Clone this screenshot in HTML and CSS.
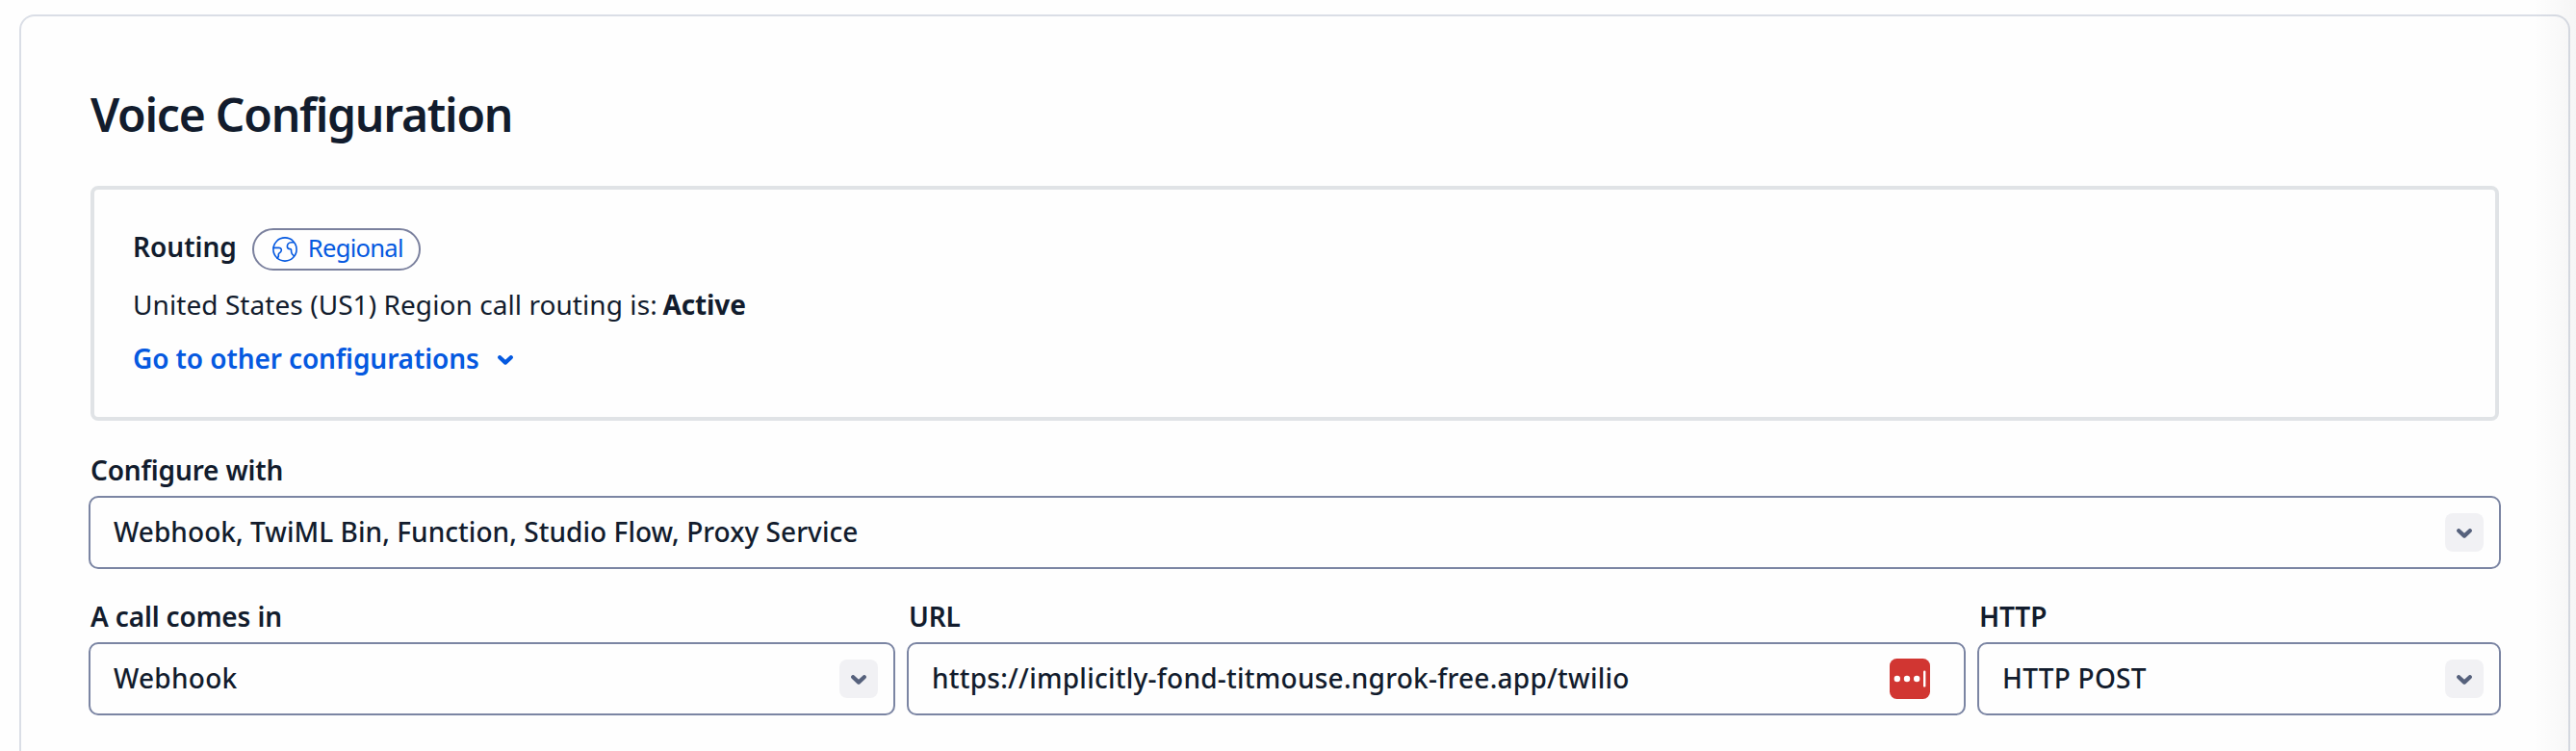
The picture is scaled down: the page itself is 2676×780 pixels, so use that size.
FILE: index.html
```
<!DOCTYPE html>
<html lang="en">
<head>
<meta charset="utf-8">
<title>Voice Configuration</title>
<link rel="stylesheet" href="styles.css">
</head>
<body>
<main class="card">
  <h1 class="title">Voice Configuration</h1>
  <section class="routing">
    <div class="routing-head">
      <h2 class="routing-label">Routing</h2>
      <span class="pill">
        <svg class="globe" viewBox="0 0 26 26" fill="none" stroke="currentColor" stroke-width="1.6" stroke-linejoin="round" stroke-linecap="round">
          <circle cx="13" cy="13" r="12.1"/>
          <path d="M1 11.4H6.8C9.6 11.4 9.8 13.8 8.8 15.4C8 16.8 6.3 16.6 6.3 18.2C6.6 20 5.6 21.8 4.9 22.2"/>
          <path d="M22.4 5.7H19.6C16.9 5.7 15.4 7.8 15.4 10C15.4 12.2 16.8 12.6 18.2 12.6C19.8 12.6 19.6 14 19.6 15.6C19.6 17.4 20.6 18.4 22.2 19.6"/>
        </svg>
        <span class="pill-text">Regional</span>
      </span>
    </div>
    <p class="status">United States (US1) Region call routing is: <strong class="active">Active</strong></p>
    <a class="link" href="#"><span>Go to other configurations</span>
      <svg class="chevron" viewBox="0 0 16 10"><path d="M2.2 2.2L8 7.6L13.8 2.2"/></svg>
    </a>
  </section>
  <form class="form">
    <div class="field">
      <label class="label">Configure with</label>
      <div class="control"><span class="value">Webhook, TwiML Bin, Function, Studio Flow, Proxy Service</span><span class="toggle"><svg class="chevron" viewBox="0 0 16 10"><path d="M2.2 2.2L8 7.6L13.8 2.2"/></svg></span></div>
    </div>
    <div class="row">
      <div class="field">
        <label class="label">A call comes in</label>
        <div class="control"><span class="value value-short">Webhook</span><span class="toggle"><svg class="chevron" viewBox="0 0 16 10"><path d="M2.2 2.2L8 7.6L13.8 2.2"/></svg></span></div>
      </div>
      <div class="field">
        <label class="label">URL</label>
        <div class="control control-url"><span class="value value-url">https://implicitly-fond-titmouse.ngrok-free.app/twilio</span>
          <svg class="vault" viewBox="0 0 42 42"><rect width="42" height="42" rx="7.5" fill="#d13632"/><g fill="#fff"><circle cx="7.8" cy="21" r="3.2"/><circle cx="18" cy="21" r="3.2"/><circle cx="28.2" cy="21" r="3.2"/><rect x="35" y="12.6" width="2.4" height="17" rx="1.2"/></g></svg>
        </div>
      </div>
      <div class="field">
        <label class="label">HTTP</label>
        <div class="control"><span class="value value-short">HTTP POST</span><span class="toggle"><svg class="chevron" viewBox="0 0 16 10"><path d="M2.2 2.2L8 7.6L13.8 2.2"/></svg></span></div>
      </div>
    </div>
  </form>
</main>
<div class="edge-shade"></div>
</body>
</html>
```
FILE: styles.css
```
* { box-sizing: border-box; }

body {
  margin: 0;
  height: 780px;
  overflow: hidden;
  padding: 15px 6px 0 20px;
  background: #fefefe;
  color: #121c2d;
  font-family: "Noto Sans", "Open Sans", sans-serif;
  font-size: 28px;
}

.card {
  height: 765px;
  padding: 72px 72px 0;
  border: 2px solid #dadee6;
  border-bottom: 0;
  border-radius: 16px 16px 0 0;
}

.title {
  margin: 0 0 44px;
  font-size: 48px;
  line-height: 60px;
  font-weight: 600;
  letter-spacing: -1.22px;
}

.routing {
  height: 244px;
  padding: 40px 38px 0 40px;
  border: 4px solid #e0e3e6;
  border-radius: 8px;
}

.routing-head {
  display: flex;
  align-items: flex-start;
  gap: 16px;
}

.routing-label {
  margin: 0;
  font-size: 28px;
  line-height: 38px;
  font-weight: 600;
}

.pill {
  display: flex;
  align-items: flex-start;
  gap: 11px;
  width: 175px;
  height: 44px;
  padding-left: 19px;
  border: 2px solid #7b819e;
  border-radius: 22px;
  color: #0559e0;
}

.globe {
  width: 26px;
  height: 26px;
  margin-top: 7px;
}

.pill-text {
  font-size: 25.6px;
  line-height: 37px;
  font-weight: 400;
  letter-spacing: -0.75px;
}

.status {
  margin: 15px 0 16px;
  line-height: 40px;
  font-weight: 400;
  letter-spacing: 0.07px;
}

.active {
  margin-left: -1.5px;
  font-weight: 700;
  letter-spacing: -0.15px;
}

.link {
  display: flex;
  align-items: flex-start;
  gap: 19px;
  color: #0559e0;
  font-weight: 600;
  line-height: 40px;
  letter-spacing: -0.1px;
  text-decoration: none;
}

.chevron {
  width: 16px;
  height: 10px;
  fill: none;
  stroke: currentColor;
  stroke-width: 4.2;
  stroke-linecap: round;
  stroke-linejoin: round;
}

.link .chevron { margin-top: 17px; }

.form { margin: 31px -2px 0; }

.row {
  display: grid;
  grid-template-columns: 838px 1100px 544px;
  gap: 12px;
  margin-top: 29px;
}

.label {
  display: block;
  padding-left: 2px;
  margin-bottom: 7px;
  line-height: 40px;
  font-weight: 600;
  letter-spacing: -0.15px;
}

.control {
  display: flex;
  align-items: center;
  justify-content: space-between;
  height: 76px;
  padding: 0 16px 0 24px;
  border: 2px solid #7b85a3;
  border-radius: 10px;
}

.control-url { padding-right: 35px; }

.value {
  padding-bottom: 2px;
  line-height: 70px;
  font-weight: 500;
  letter-spacing: 0.05px;
}

.value-short { letter-spacing: 0.25px; }

.value-url { letter-spacing: 0.25px; }

.toggle {
  display: flex;
  align-items: center;
  justify-content: center;
  width: 40px;
  height: 40px;
  border-radius: 8px;
  background: #f1f1f4;
  color: #56617c;
}

.toggle .chevron { margin-top: 2px; }

.vault {
  width: 42px;
  height: 42px;
}

/* soft shade along the right edge of the viewport */
.edge-shade {
  position: absolute;
  top: 0;
  right: 0;
  width: 44px;
  height: 780px;
  background: linear-gradient(to right, rgba(0, 0, 0, 0), rgba(0, 0, 0, 0.035));
  pointer-events: none;
}
```
